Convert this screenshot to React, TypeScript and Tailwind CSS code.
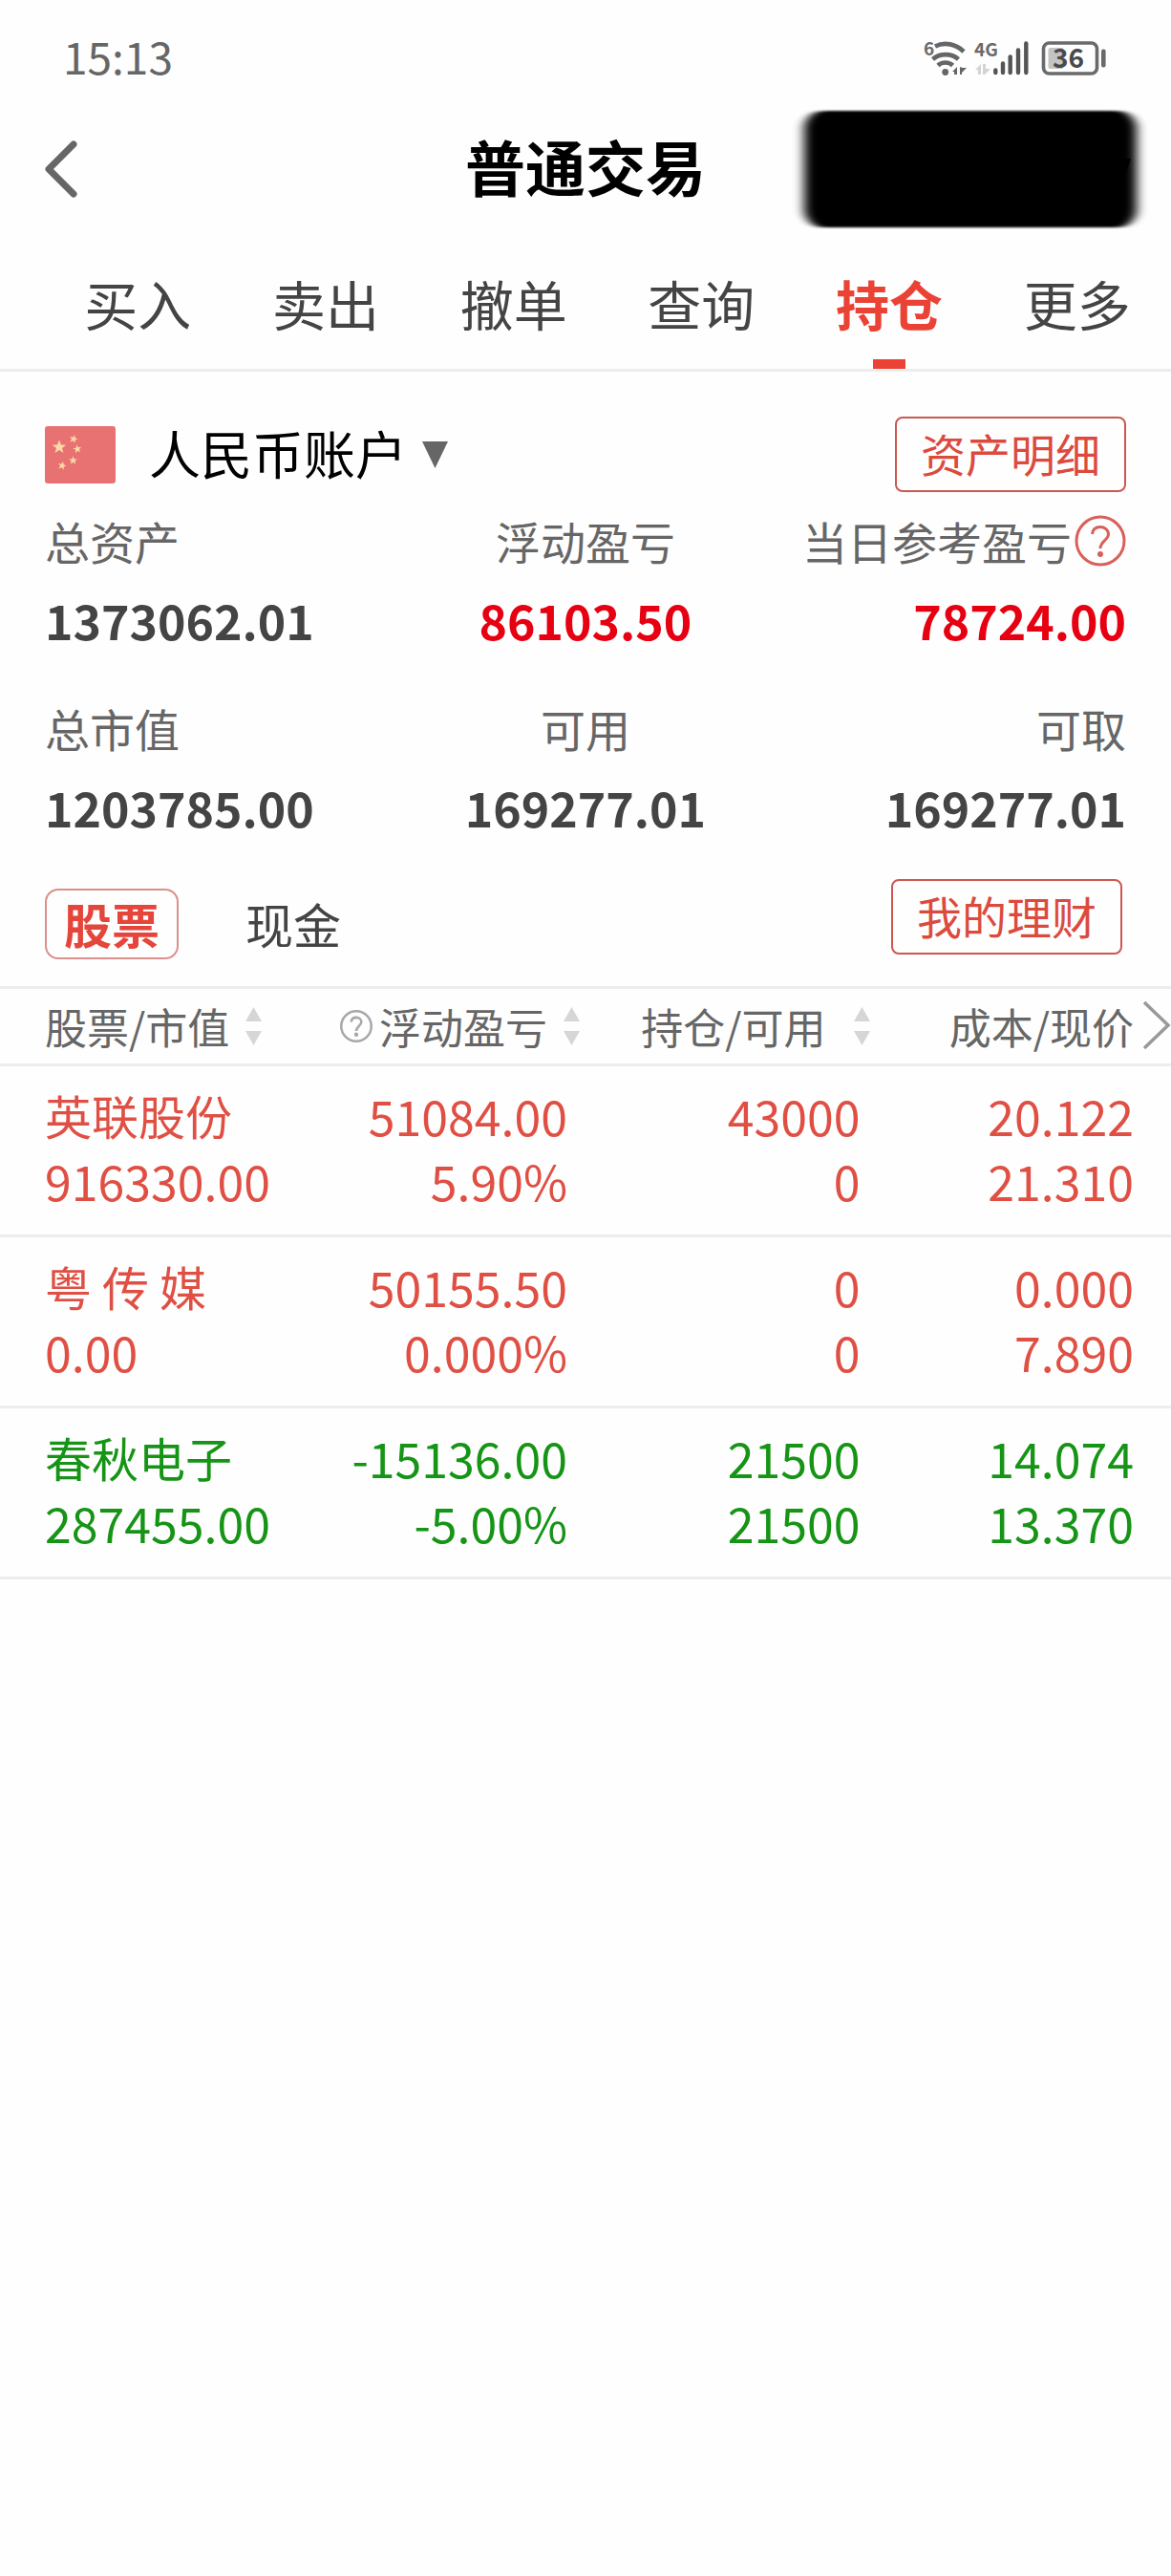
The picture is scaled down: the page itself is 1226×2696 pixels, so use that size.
import React, { useState } from 'react';
import clsx from 'clsx';

interface Holding {
  name: string;
  marketValue: string;
  profit: string;
  profitRate: string;
  position: string;
  available: string;
  cost: string;
  price: string;
  falling?: boolean;
}

interface Summary {
  label: string;
  value: string;
  align: string;
  highlight?: boolean;
  help?: boolean;
}

const TABS = ['买入', '卖出', '撤单', '查询', '持仓', '更多'];

const SUMMARY: Summary[] = [
  { label: '总资产', value: '1373062.01', align: 'justify-start text-left' },
  { label: '浮动盈亏', value: '86103.50', align: 'justify-center text-center', highlight: true },
  { label: '当日参考盈亏', value: '78724.00', align: 'justify-end text-right', highlight: true, help: true },
  { label: '总市值', value: '1203785.00', align: 'justify-start text-left' },
  { label: '可用', value: '169277.01', align: 'justify-center text-center' },
  { label: '可取', value: '169277.01', align: 'justify-end text-right' },
];

const HOLDINGS: Holding[] = [
  {
    name: '英联股份',
    marketValue: '916330.00',
    profit: '51084.00',
    profitRate: '5.90%',
    position: '43000',
    available: '0',
    cost: '20.122',
    price: '21.310',
  },
  {
    name: '粤 传 媒',
    marketValue: '0.00',
    profit: '50155.50',
    profitRate: '0.000%',
    position: '0',
    available: '0',
    cost: '0.000',
    price: '7.890',
  },
  {
    name: '春秋电子',
    marketValue: '287455.00',
    profit: '-15136.00',
    profitRate: '-5.00%',
    position: '21500',
    available: '21500',
    cost: '14.074',
    price: '13.370',
    falling: true,
  },
];

const StatusIcons: React.FC = () => (
  <svg width="220" height="60" viewBox="0 0 220 60" fill="none" aria-hidden="true">
    {/* Wifi */}
    <text x="17" y="28" fontSize="19" fontWeight="700" fill="#6a6a6a">6</text>
    <g stroke="#666" strokeWidth="4.6">
      <path d="M29 18.5C39 13.5 51 16 59 24" />
      <path d="M26.5 32C34 25.5 46 25.5 53.5 32" />
      <path d="M32 38.5C36 34.5 43.5 34.5 47.5 38.5" />
    </g>
    <circle cx="39.7" cy="45.5" r="3.4" fill="#666" />
    <path d="M47 45l5-5v8h-3v-3zM55 40v8l2 0 0-2 5-5h-4z" fill="#666" />
    {/* Mobile signal */}
    <text x="70" y="29" fontSize="19" fontWeight="700" fill="#6a6a6a">4G</text>
    <path d="M71 43l6-6v11h-3v-5zM79 37h3v5h5l-6 6h-2z" fill="#d4d4d4" />
    <g stroke="#555" strokeWidth="4.4" strokeLinecap="round">
      <path d="M92.3 43.5V46" />
      <path d="M100 36.5V46" />
      <path d="M107.7 29.5V46" />
      <path d="M116 22.5V46" />
      <path d="M124.3 15.5V46" />
    </g>
    {/* Battery */}
    <rect x="142.5" y="15" width="56" height="32" rx="6" stroke="#6a6a6a" strokeWidth="3.6" />
    <rect x="147.5" y="20" width="16" height="22" rx="2" fill="#c4c4c4" />
    <rect x="203" y="21.5" width="4.6" height="19" rx="2" fill="#6a6a6a" />
    <text x="152" y="41" fontSize="28" fontWeight="700" fill="#4a4a4a">36</text>
  </svg>
);

// Blacked out account number
const HiddenAccount: React.FC = () => (
  <svg width="376" height="140" viewBox="0 0 376 140" aria-hidden="true">
    <defs>
      <filter id="smudge" x="-10%" y="-10%" width="120%" height="120%">
        <feGaussianBlur stdDeviation="6 1" />
      </filter>
    </defs>
    <rect x="16" y="9" width="348" height="122" rx="20" filter="url(#smudge)" />
    <path d="M341 59h17l-8 22z" />
  </svg>
);

const HelpIcon: React.FC<{ className: string; strokeWidth: number }> = ({ className, strokeWidth }) => (
  <svg className={className} viewBox="0 0 54 54" fill="none" stroke="currentColor" strokeWidth={strokeWidth} aria-hidden="true">
    <circle cx="27" cy="27" r="25" />
    <path d="M18.5 20c.5-5 4-7.5 8.5-7.5s8.5 3 8.5 7.5c0 6-8.5 7.5-8.5 15" />
    <circle cx="27" cy="41" r="1.5" fill="currentColor" />
  </svg>
);

const SortIcon: React.FC = () => (
  <svg className="h-[40px] w-[17px] shrink-0" viewBox="0 0 17 40" fill="#d6d6d6" aria-hidden="true">
    <path d="M8.5 0L17 15H0zM8.5 40L17 25H0z" />
  </svg>
);

const ChinaFlag: React.FC = () => (
  <svg className="h-[60px] w-[74px] shrink-0" viewBox="0 0 74 60" aria-hidden="true">
    <defs>
      <path id="star" d="M0-10L2.6-3.400 9.500-3.100 4 1.200 5.900 8.100 0 4 -5.900 8.100 -4 1.200 -9.500-3.100 -2.600-3.400z" />
    </defs>
    <rect width="74" height="60" rx="3" fill="#e87272" />
    <g fill="#fbd9a6">
      <use href="#star" transform="translate(15 22) scale(.75)" />
      <use href="#star" transform="translate(30 13.5) rotate(15) scale(.46)" />
      <use href="#star" transform="translate(34 24) rotate(-10) scale(.46)" />
      <use href="#star" transform="translate(29.5 36) scale(.46)" />
      <use href="#star" transform="translate(18 41.5) rotate(15) scale(.46)" />
    </g>
  </svg>
);

const OutlineButton: React.FC<{ children: React.ReactNode }> = ({ children }) => (
  <button className="h-[79px] rounded-[8px] border-2 border-[#cb5850] px-[25px] pb-[3px] text-[47px] leading-[72px] text-[#dc4a3e]">
    {children}
  </button>
);

const App: React.FC = () => {
  const [activeTab, setActiveTab] = useState('持仓');
  const [asset, setAsset] = useState('股票');

  return (
    <div className="min-h-screen bg-[#fefefe] font-['Noto_Sans_CJK_SC',sans-serif] text-[#444]">
      {/* Status bar */}
      <div className="flex h-[107px] items-start justify-between pt-[30px] pr-[56px] pl-[66px]">
        <span className="text-[46px] leading-[56px] text-[#666]">15:13</span>
        <StatusIcons />
      </div>

      <header className="grid h-[130px] grid-cols-[1fr_auto_1fr] items-center px-[24px]">
        <button aria-label="返回" className="w-[58px] pl-[22px]">
          <svg width="36" height="62" viewBox="0 0 36 62" fill="none" aria-hidden="true">
            <path d="M31 5L5 31 31 57" stroke="#666" strokeWidth="7" strokeLinecap="round" strokeLinejoin="round" />
          </svg>
        </button>
        <h1 className="pb-2 text-[63px] leading-[80px] font-bold text-black">普通交易</h1>
        <div className="flex justify-end">
          <HiddenAccount />
        </div>
      </header>

      <nav className="flex h-[152px] border-b-3 border-[#ededed] pl-[46px]">
        {TABS.map(tab => (
          <button
            key={tab}
            onClick={() => setActiveTab(tab)}
            className={clsx(
              'flex flex-1 flex-col items-center justify-between pt-[40px] text-[56px] leading-[80px]',
              activeTab === tab && 'font-bold text-[#ea4335]'
            )}
          >
            {tab}
            {activeTab === tab && <span className="h-[10px] w-[34px] bg-[#ea4335]" />}
          </button>
        ))}
      </nav>

      {/* Account summary */}
      <section className="px-[47px] pt-[47px]">
        <div className="flex items-center justify-between">
          <button className="flex items-center text-[54px] leading-[72px] text-black">
            <ChinaFlag />
            <span className="pb-[4px] pl-[35px]">人民币账户</span>
            <svg className="ml-[16px] h-[28px] w-[27px]" viewBox="0 0 27 28" fill="#666" aria-hidden="true">
              <path d="M0 0h27L13.5 28z" />
            </svg>
          </button>
          <OutlineButton>资产明细</OutlineButton>
        </div>

        <dl className="mt-[17px] grid grid-cols-3 gap-y-[28px]">
          {SUMMARY.map(item => (
            <div key={item.label}>
              <dt className={clsx('flex items-center text-[47px] leading-[68px] whitespace-nowrap text-[#666]', item.align)}>
                {item.label}
                {item.help && (
                  <button aria-label="说明" className="ml-[3px] text-[#d9605a]">
                    <HelpIcon className="h-[54px] w-[54px]" strokeWidth={3} />
                  </button>
                )}
              </dt>
              <dd className={clsx('pt-[6px] pb-[10px] text-[50px] leading-[84px] font-bold', item.align, item.highlight && 'text-[#e60012]')}>
                {item.value}
              </dd>
            </div>
          ))}
        </dl>
      </section>

      <div className="flex items-start justify-between pt-[24px] pr-[51px] pb-[28px] pl-[47px]">
        <div className="flex gap-[50px] pt-[10px] text-[50px] leading-[68px]">
          {['股票', '现金'].map(item => (
            <button
              key={item}
              onClick={() => setAsset(item)}
              className={clsx(
                'h-[74px] rounded-[14px] border-2 px-[18px] pb-[3px]',
                asset === item ? 'border-[#db8f8b] font-bold text-[#e5453a]' : 'border-transparent'
              )}
            >
              {item}
            </button>
          ))}
        </div>
        <OutlineButton>我的理财</OutlineButton>
      </div>

      <div className="relative">
        <table className="w-full table-fixed border-collapse">
          <thead className="border-y-3 border-[#ededed] text-[44px] leading-[60px] whitespace-nowrap text-[#666]">
            <tr className="h-[81px]">
              <th className="pl-[47px] font-normal">
                <button className="flex items-center gap-[17px]">
                  <span>股票/市值</span>
                  <SortIcon />
                </button>
              </th>
              <th className="pr-[6px] font-normal">
                <button className="ml-auto flex items-center gap-[17px]">
                  <span className="flex items-center gap-[7px]">
                    <HelpIcon className="h-[34px] w-[34px] text-[#a8a8a8]" strokeWidth={4} />
                    浮动盈亏
                  </span>
                  <SortIcon />
                </button>
              </th>
              <th className="pr-[9px] font-normal">
                <button className="ml-auto flex items-center gap-[29px]">
                  <span>持仓/可用</span>
                  <SortIcon />
                </button>
              </th>
              <th className="pr-[39px] text-right font-normal">成本/现价</th>
            </tr>
          </thead>
          <tbody className="text-[50px] leading-[68px]">
            {HOLDINGS.map(h => (
              <tr
                key={h.name}
                className={clsx('h-[179px] border-b-3 border-[#ededed] text-right', h.falling ? 'text-[#159415]' : 'text-[#e04f43]')}
              >
                <td className="pb-[6px] pl-[47px] text-left whitespace-nowrap">
                  <div className="text-[49px]">{h.name}</div>
                  <div>{h.marketValue}</div>
                </td>
                <td className="pr-[19px] pb-[6px]">
                  <div>{h.profit}</div>
                  <div>{h.profitRate}</div>
                </td>
                <td className="pr-[19px] pb-[6px]">
                  <div>{h.position}</div>
                  <div>{h.available}</div>
                </td>
                <td className="pr-[39px] pb-[6px]">
                  <div>{h.cost}</div>
                  <div>{h.price}</div>
                </td>
              </tr>
            ))}
          </tbody>
        </table>

        {/* Scroll hint over the header row */}
        <button aria-label="更多列" className="absolute top-[16px] right-0">
          <svg width="30" height="50" viewBox="0 0 30 50" fill="none" aria-hidden="true">
            <path d="M2 1L27 25 2 49" stroke="#999" strokeWidth="3.5" />
          </svg>
        </button>
      </div>
    </div>
  );
};

export default App;
